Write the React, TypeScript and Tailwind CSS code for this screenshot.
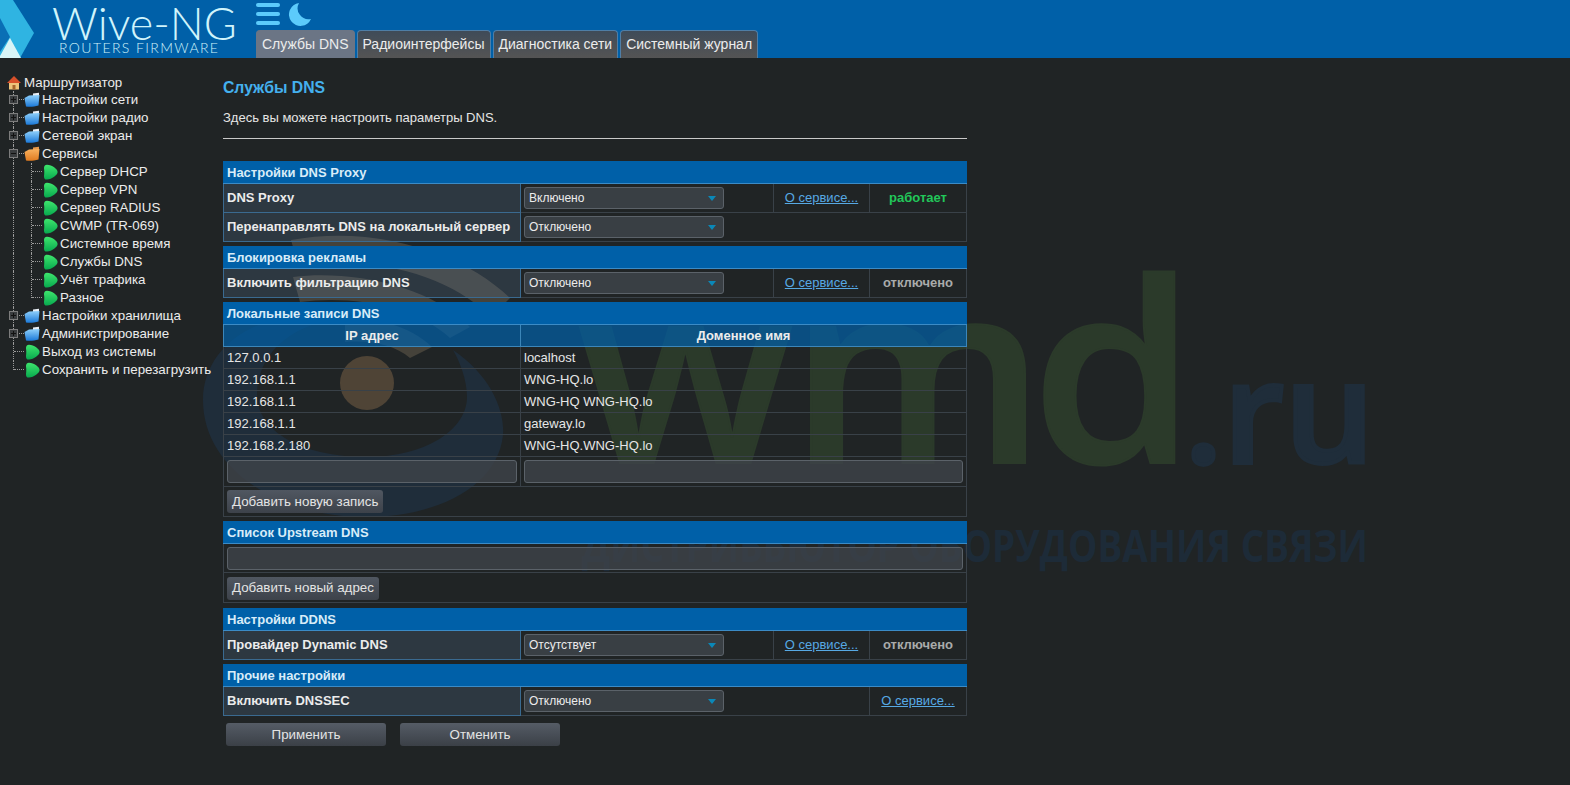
import React from 'react'

const FONT = "font-['Liberation_Sans',Arial,sans-serif]"

function Watermark() {
  return (
    <svg className="absolute inset-0 w-full h-full" viewBox="0 0 1570 785" width="1570" height="785">
      {/* signal logo */}
      <path d="M453 350 C490 375 505 410 503 435 C498 485 440 517 365 517 C280 517 203 470 203 400 C203 350 250 318 300 316 L335 320 C290 325 257 355 257 395 C257 430 300 457 367 457 C425 457 467 430 467 397 C467 380 460 362 453 350 Z" fill="#1f2d3a" />
      <circle cx="367" cy="383" r="27" fill="#4f4436" />
      <path d="M291 240 C370 225 460 250 510 298 L491 317 C445 272 370 255 299 268 Z" fill="#45423a" />
      <path d="M293 277 C350 270 430 285 470 327 L450 338 C415 305 350 295 300 302 Z" fill="#45423a" />
      <path d="M345 318 C375 318 410 325 432 347 L410 358 C395 345 370 340 345 342 Z" fill="#45423a" />
      {/* site name */}
      <g fontFamily="'Open Sans', sans-serif" fontWeight="600" fontSize="252" fill="#2b3a2a" stroke="#2b3a2a" strokeWidth="2">
        <text x="577" y="463" textLength="217" lengthAdjust="spacingAndGlyphs">w</text>
        <text x="789" y="463" textLength="257" lengthAdjust="spacingAndGlyphs">m</text>
        <text x="1031" y="463" textLength="165" lengthAdjust="spacingAndGlyphs">d</text>
      </g>
      <text x="1184" y="463" fill="#1f2d3a" stroke="#1f2d3a" strokeWidth="4" fontFamily="'Open Sans', sans-serif" fontWeight="600" fontSize="142">.ru</text>
      <text x="582" y="562" fill="#1d2b38" fontFamily="'Open Sans', sans-serif" fontWeight="700" fontSize="45" textLength="786" lengthAdjust="spacingAndGlyphs">ДИСТРИБЬЮТОР ОБОРУДОВАНИЯ СВЯЗИ</text>
    </svg>
  )
}

function Header() {
  return (
    <div className="relative h-[58px] bg-[#0060a8] flex overflow-hidden">
      <svg className="w-[52px] h-[58px] shrink-0" viewBox="0 0 52 58">
        <polygon points="0,0 13,0 34,33 20,58 0,58" fill="#2fb4e2" />
        <polygon points="0,18 10,37 0,52" fill="#0a6fb5" />
        <polygon points="0,56 10,38 21,58 0,58" fill="#d8f4f6" />
      </svg>
      <div className="w-[204px] shrink-0 font-['Lato',sans-serif] text-[#d0f4fb] font-light whitespace-nowrap">
        <div className="text-[45px] leading-[46px] h-[41px]">Wive-NG</div>
        <div className="pl-[7px] text-[14px] leading-[13px] tracking-[1.4px]">ROUTERS FIRMWARE</div>
      </div>
      <div>
        <div className="flex h-[30px] items-start pt-[3px] gap-[8px]">
          <div className="flex flex-col gap-[5px] w-[24px]">
            <div className="h-[4px] rounded-full bg-[#5ccbfb]" />
            <div className="h-[4px] rounded-full bg-[#5ccbfb]" />
            <div className="h-[4px] rounded-full bg-[#5ccbfb]" />
          </div>
          <svg width="23" height="23" viewBox="0 0 23 23">
            <path d="M11 0 A11.5 11.5 0 1 0 23 16 A11 11 0 0 1 11 0 Z" fill="#5ccbfb" />
          </svg>
        </div>
        <div className={`flex gap-[2px] text-[14px] ${FONT}`}>
          <Tab active>Службы DNS</Tab>
          <Tab>Радиоинтерфейсы</Tab>
          <Tab>Диагностика сети</Tab>
          <Tab>Системный журнал</Tab>
        </div>
      </div>
    </div>
  )
}

function Tab({ children, active }: { children: React.ReactNode; active?: boolean }) {
  return (
    <div className={`h-[28px] px-[5px] leading-[27px] rounded-t-[4px] border border-b-0 whitespace-nowrap text-[#ececec] ${active ? 'bg-[#6b7585] border-[#6b7585]' : 'bg-gradient-to-b from-[#3f4b58] to-[#545454] border-[#4f7ea6]'}`}>
      {children}
    </div>
  )
}

function HomeIcon() {
  return (
    <svg width="16" height="16" viewBox="0 0 16 16" className="shrink-0">
      <polygon points="8,1 15,8 1,8" fill="#d8502a" />
      <rect x="3" y="8" width="10" height="6.5" fill="#eec47c" />
      <rect x="6.5" y="10" width="3" height="4.5" fill="#a8662c" />
    </svg>
  )
}

function FolderIcon({ open }: { open?: boolean }) {
  const top = open ? '#f9b15e' : '#8fd0fb'
  const bottom = open ? '#e07b20' : '#1b79d8'
  const id = open ? 'folder-open' : 'folder-closed'
  return (
    <svg width="16" height="16" viewBox="0 0 16 16" className="shrink-0">
      <defs>
        <linearGradient id={id} x1="0" y1="0" x2="0" y2="1">
          <stop offset="0" stopColor={top} />
          <stop offset="1" stopColor={bottom} />
        </linearGradient>
      </defs>
      <path d="M9 1.5 L15 0.8 L15 5 L9 5 Z" fill={open ? '#e99a4a' : '#e8eef5'} />
      <path d="M0.5 6 L5 3.5 L15.5 3 L14.5 13.5 C10 15 5 15 2 14.5 Z" fill={`url(#${id})`} />
    </svg>
  )
}

function LeafIcon() {
  return (
    <svg width="15" height="16" viewBox="0 0 15 16" className="shrink-0">
      <defs>
        <linearGradient id="leaf" x1="0" y1="0" x2="0" y2="1">
          <stop offset="0" stopColor="#3ee56d" />
          <stop offset="1" stopColor="#07a94e" />
        </linearGradient>
      </defs>
      <path d="M4 0.8 C9 1 14.6 5 14.6 8 C14.6 11 9 15.2 4 15.6 C2 15.8 0.8 14.5 1 12 C1.4 9 1.4 7 1 4.5 C0.8 2.2 2 0.8 4 0.8 Z" fill="url(#leaf)" />
    </svg>
  )
}

function Toggle({ open }: { open?: boolean }) {
  return (
    <span className="absolute left-[3px] top-[4px] w-[9px] h-[9px] border border-[#7c7c7c] bg-[#3a3d3f] flex items-center justify-center">
      <span className="absolute w-[5px] h-[1px] bg-[#111]" />
      {!open && <span className="absolute w-[1px] h-[5px] bg-[#111]" />}
    </span>
  )
}

// one slot of tree indent, 18px wide, with its dotted guide lines
function Slot({ kind, toggle, open }: { kind: 'pass' | 'tee' | 'end'; toggle?: boolean; open?: boolean }) {
  return (
    <span className="relative block w-[18px] h-[18px] shrink-0">
      <span className={`absolute left-[7px] top-0 border-l border-dotted border-[#9a9a9a] ${kind === 'end' ? 'h-[9px]' : 'h-[18px]'}`} />
      {kind !== 'pass' && <span className="absolute left-[8px] top-[8px] w-[10px] border-t border-dotted border-[#9a9a9a]" />}
      {toggle && <Toggle open={open} />}
    </span>
  )
}

type Node = { text: string; icon: 'folder' | 'open' | 'leaf'; level: 1 | 2; end?: boolean }

const tree: Node[] = [
  { text: 'Настройки сети', icon: 'folder', level: 1 },
  { text: 'Настройки радио', icon: 'folder', level: 1 },
  { text: 'Сетевой экран', icon: 'folder', level: 1 },
  { text: 'Сервисы', icon: 'open', level: 1 },
  { text: 'Сервер DHCP', icon: 'leaf', level: 2 },
  { text: 'Сервер VPN', icon: 'leaf', level: 2 },
  { text: 'Сервер RADIUS', icon: 'leaf', level: 2 },
  { text: 'CWMP (TR-069)', icon: 'leaf', level: 2 },
  { text: 'Системное время', icon: 'leaf', level: 2 },
  { text: 'Службы DNS', icon: 'leaf', level: 2 },
  { text: 'Учёт трафика', icon: 'leaf', level: 2 },
  { text: 'Разное', icon: 'leaf', level: 2, end: true },
  { text: 'Настройки хранилища', icon: 'folder', level: 1 },
  { text: 'Администрирование', icon: 'folder', level: 1 },
  { text: 'Выход из системы', icon: 'leaf', level: 1 },
  { text: 'Сохранить и перезагрузить', icon: 'leaf', level: 1, end: true },
]

function Sidebar() {
  return (
    <div className={`w-[223px] shrink-0 pt-[16px] pl-[6px] text-[13.33px] leading-[18px] text-[#ececec] whitespace-nowrap ${FONT}`}>
      <div className="flex items-center h-[17px] gap-[2px]">
        <HomeIcon />
        <span>Маршрутизатор</span>
      </div>
      {tree.map((n) => (
        <div key={n.text} className="flex items-center h-[18px]">
          {n.level === 2 && <Slot kind="pass" />}
          <Slot kind={n.end ? 'end' : 'tee'} toggle={n.icon !== 'leaf'} open={n.icon === 'open'} />
          <span className="w-[18px] shrink-0 flex">
            {n.icon === 'leaf' ? <span className="pl-[1px]"><LeafIcon /></span> : <FolderIcon open={n.icon === 'open'} />}
          </span>
          <span>{n.text}</span>
        </div>
      ))}
    </div>
  )
}

function SectionHead({ children }: { children: React.ReactNode }) {
  return (
    <div className="h-[23px] bg-[#0060a8] border-b border-[#3b8bc6] pl-[4px] text-[13px] leading-[23px] font-bold text-[#d8ecf8]">
      {children}
    </div>
  )
}

function Select({ value }: { value: string }) {
  return (
    <div className="relative w-[200px] h-[22px]">
      <select defaultValue={value} className="block appearance-none w-full h-full pl-[4px] text-[12px] text-[#ececec] bg-[#3e444a]/85 border border-[#5b6269] rounded-[3px] outline-none">
        <option>{value}</option>
      </select>
      <span className="absolute right-[8px] top-[9px] border-x-[4px] border-x-transparent border-t-[5px] border-t-[#0b88b8]" />
    </div>
  )
}

function ServiceLink() {
  return <a className="text-[#57a9e4] underline text-[13px] font-normal">О сервисе...</a>
}

const LINE = 'border-[#394148]'

function Row({ label, value, link, status }: { label: string; value: string; link?: boolean; status?: React.ReactNode }) {
  return (
    <div className="flex h-[29px]">
      <div className="w-[298px] shrink-0 flex items-center border border-t-0 border-[#3a6a90] bg-[#5a7fa8]/22 pl-[3px] text-[13px] font-bold text-[#ececec] whitespace-nowrap">
        {label}
      </div>
      <div className={`${link && status ? 'w-[253px] border-r' : link ? 'w-[349px] border-r' : 'flex-1 border-r'} shrink-0 flex items-center pl-[3px] border-b ${LINE}`}>
        <Select value={value} />
      </div>
      {link && status && (
        <div className={`w-[96px] shrink-0 flex items-center justify-center border-b border-r ${LINE}`}><ServiceLink /></div>
      )}
      {link && (
        <div className={`flex-1 flex items-center justify-center border-b border-r text-[13px] font-bold ${LINE}`}>
          {status || <ServiceLink />}
        </div>
      )}
    </div>
  )
}

const OFF = <span className="text-[#a9abab]">отключено</span>

const records = [
  ['127.0.0.1', 'localhost'],
  ['192.168.1.1', 'WNG-HQ.lo'],
  ['192.168.1.1', 'WNG-HQ WNG-HQ.lo'],
  ['192.168.1.1', 'gateway.lo'],
  ['192.168.2.180', 'WNG-HQ.WNG-HQ.lo'],
]

function SmallButton({ children }: { children: React.ReactNode }) {
  return (
    <button className="block h-[23px] px-[5px] rounded-[3px] bg-gradient-to-b from-[#505761] to-[#3d424a] text-[13.33px] text-[#e4e4e4] whitespace-nowrap">
      {children}
    </button>
  )
}

function TextField() {
  return <input className="block w-full h-[23px] rounded-[3px] bg-[#3e444a]/80 border border-[#5b6269] outline-none" />
}

function Records() {
  return (
    <div className="text-[13px] text-[#e6e6e6]">
      <div className="flex h-[22px] font-bold text-[#ececec] text-center leading-[21px] bg-[#0060a8]/70">
        <div className="w-[298px] shrink-0 border border-t-0 border-[#3c86b9]">IP адрес</div>
        <div className="flex-1 border-b border-r border-[#3c86b9]">Доменное имя</div>
      </div>
      {records.map((r, i) => (
        <div key={i} className="flex h-[22px] leading-[21px]">
          <div className={`w-[298px] shrink-0 border border-t-0 pl-[3px] ${LINE}`}>{r[0]}</div>
          <div className={`flex-1 border-b border-r pl-[3px] ${LINE}`}>{r[1]}</div>
        </div>
      ))}
      <div className="flex h-[30px]">
        <div className={`w-[298px] shrink-0 flex items-center border border-t-0 px-[3px] ${LINE}`}><TextField /></div>
        <div className={`flex-1 flex items-center border-b border-r px-[3px] ${LINE}`}><TextField /></div>
      </div>
      <div className={`flex items-center h-[30px] border border-t-0 px-[3px] ${LINE}`}>
        <SmallButton>Добавить новую запись</SmallButton>
      </div>
    </div>
  )
}

function ApplyButton({ children }: { children: React.ReactNode }) {
  return (
    <button className="w-[160px] h-[23px] rounded-[3px] bg-gradient-to-b from-[#555c66] to-[#3b4047] text-[13.33px] text-[#e4e4e4]">
      {children}
    </button>
  )
}

function Main() {
  return (
    <div className={`w-[744px] shrink-0 ${FONT}`}>
      <h1 className="mt-[20px] h-[20px] text-[15.75px] leading-[19px] font-bold text-[#44b0ee]">Службы DNS</h1>
      <p className="mt-[10px] text-[13px] leading-[20px] text-[#e6e6e6]">Здесь вы можете настроить параметры DNS.</p>
      <hr className="mt-[10px] border-t border-[#c9c9c9]" />

      <div className="mt-[22px] flex flex-col gap-[4px]">
        <div>
          <SectionHead>Настройки DNS Proxy</SectionHead>
          <Row label="DNS Proxy" value="Включено" link status={<span className="text-[#22c75a]">работает</span>} />
          <Row label="Перенаправлять DNS на локальный сервер" value="Отключено" />
        </div>
        <div>
          <SectionHead>Блокировка рекламы</SectionHead>
          <Row label="Включить фильтрацию DNS" value="Отключено" link status={OFF} />
        </div>
        <div>
          <SectionHead>Локальные записи DNS</SectionHead>
          <Records />
        </div>
        <div>
          <SectionHead>Список Upstream DNS</SectionHead>
          <div className={`flex items-center h-[29px] border border-t-0 px-[3px] ${LINE}`}><TextField /></div>
          <div className={`flex items-center h-[30px] pt-[1px] border border-t-0 px-[3px] ${LINE}`}>
            <SmallButton>Добавить новый адрес</SmallButton>
          </div>
        </div>
        <div className="mt-[1px]">
          <SectionHead>Настройки DDNS</SectionHead>
          <Row label="Провайдер Dynamic DNS" value="Отсутствует" link status={OFF} />
        </div>
        <div>
          <SectionHead>Прочие настройки</SectionHead>
          <Row label="Включить DNSSEC" value="Отключено" link />
        </div>
      </div>

      <div className="mt-[7px] pl-[3px] flex gap-[14px]">
        <ApplyButton>Применить</ApplyButton>
        <ApplyButton>Отменить</ApplyButton>
      </div>
    </div>
  )
}

export default function App() {
  return (
    <div className="relative h-screen overflow-hidden bg-[#202425]">
      <Watermark />
      <div className="relative">
        <Header />
        <div className="flex">
          <Sidebar />
          <Main />
        </div>
      </div>
    </div>
  )
}
